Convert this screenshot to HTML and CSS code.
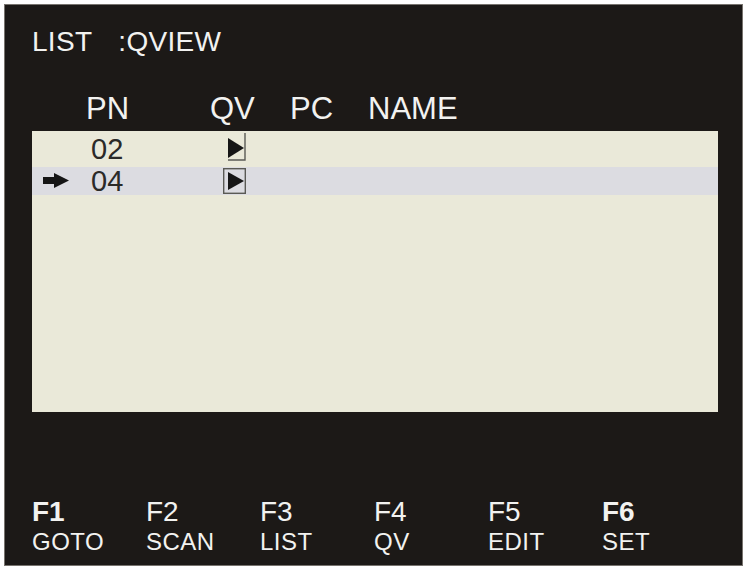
FILE: index.html
```html
<!DOCTYPE html>
<html lang="en">
  <head>
    <meta charset="UTF-8" />
    <title>LIST : QVIEW</title>
    <link rel="stylesheet" href="styles.css">
  </head>
  <body>
    <div class="osd">
      <h1 class="titulo">LIST<span class="modo">:QVIEW</span></h1>

      <div class="cabecalho">
        <span></span>
        <span>PN</span>
        <span>QV</span>
        <span>PC</span>
        <span>NAME</span>
      </div>

      <ul class="lista">
        <li class="linha">
          <span class="seta"></span>
          <span class="pn">02</span>
          <span class="qv">
            <svg width="24" height="28" viewBox="0 0 24 28">
              <polyline points="22,-2 22,25 5,25" fill="none" stroke="#5a5a55" stroke-width="1.4" />
              <polygon points="5,3 21,13 5,23" fill="#161616" />
            </svg>
          </span>
        </li>
        <li class="linha selecionada">
          <span class="seta">
            <svg width="26" height="15" viewBox="0 0 26 15">
              <rect x="0" y="4" width="13" height="7" fill="#151515" />
              <polygon points="11,0 26,7.5 11,15" fill="#151515" />
            </svg>
          </span>
          <span class="pn">04</span>
          <span class="qv">
            <svg width="24" height="28" viewBox="0 0 24 28">
              <rect x="0.7" y="1.7" width="21.6" height="24.6" fill="none" stroke="#5a5a55" stroke-width="1.4" />
              <polygon points="5,5 21,14 5,23" fill="#161616" />
            </svg>
          </span>
        </li>
      </ul>

      <div class="teclas">
        <div class="tecla"><b class="forte">F1</b><span>GOTO</span></div>
        <div class="tecla"><b>F2</b><span>SCAN</span></div>
        <div class="tecla"><b>F3</b><span>LIST</span></div>
        <div class="tecla"><b>F4</b><span>QV</span></div>
        <div class="tecla"><b>F5</b><span>EDIT</span></div>
        <div class="tecla"><b class="forte">F6</b><span>SET</span></div>
      </div>
    </div>
  </body>
</html>
```

FILE: styles.css
```css
body {
  margin: 0;
  padding: 4px;
  background-color: #ffffff;
  font-family: "Liberation Sans", Arial, sans-serif;
}

.osd {
  width: 686px;
  height: 537px;
  padding: 23px 24px 0 27px;
  background-color: #1c1917;
  border: 1px solid #77736e;
  color: #f2f2f0;
}

.titulo {
  margin: 0;
  font-size: 28px;
  line-height: 28px;
  font-weight: normal;
  letter-spacing: 0.3px;
}

.titulo .modo {
  margin-left: 26px;
}

.cabecalho {
  display: grid;
  grid-template-columns: 54px 124px 80px 78px 1fr;
  margin-top: 37px;
  font-size: 31px;
  line-height: 31px;
}

.lista {
  list-style: none;
  margin: 7px 0 0;
  padding: 4px 0 0;
  height: 277px;
  background-color: #eae9d9;
  display: flex;
  flex-direction: column;
  gap: 4px;
  color: #2b2a28;
}

.linha {
  display: grid;
  grid-template-columns: 59px 132px 1fr;
  height: 28px;
  font-size: 29px;
  line-height: 28px;
}

.linha.selecionada {
  background-color: #dcdce1;
}

.seta {
  padding: 6px 0 0 11px;
}

.seta svg,
.qv svg {
  display: block;
  overflow: visible;
}

.teclas {
  display: grid;
  grid-template-columns: repeat(6, 114px);
  margin-top: 86px;
}

.tecla {
  display: flex;
  flex-direction: column;
  gap: 4px;
}

.tecla b {
  font-size: 28px;
  line-height: 28px;
  font-weight: normal;
}

.tecla b.forte {
  font-weight: bold;
}

.tecla span {
  font-size: 24px;
  line-height: 24px;
  letter-spacing: 0.5px;
}
```
